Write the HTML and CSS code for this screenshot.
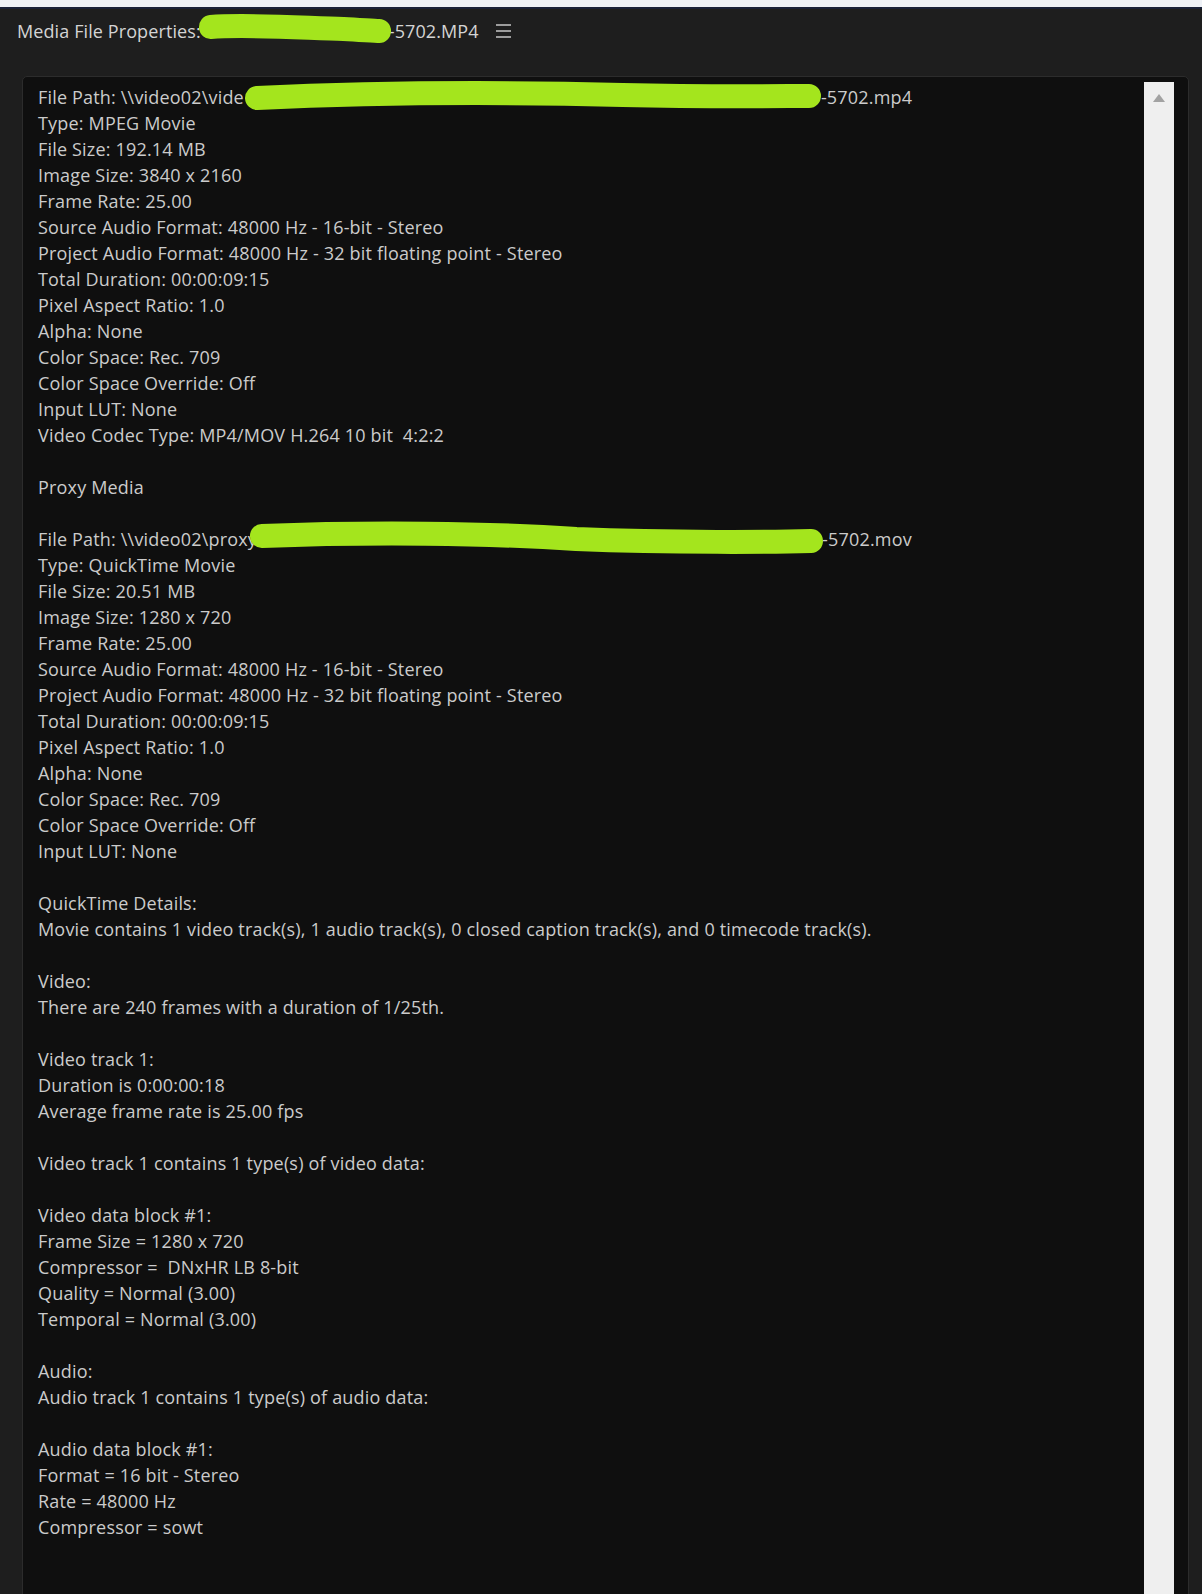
FILE: index.html
```html
<!DOCTYPE html>
<html>
	<head>
		<meta charset="utf-8" />
		<title>Media File Properties</title>
		<link rel="stylesheet" href="styles.css">
	</head>
	<body>
		<div class="topbar"></div>

		<div class="panel">
			<div class="panel-header">
				<span class="title">Media File Properties:<span class="redact r-title"><svg viewBox="0 0 200 34" preserveAspectRatio="none"><path d="M13,15 C50,12 110,16 150,17 C170,18 182,19 187,19" /></svg></span>-5702.MP4</span>
				<svg class="menu-icon" width="15" height="14" viewBox="0 0 15 14"><rect x="0" y="0" width="15" height="2" /><rect x="0" y="6" width="15" height="2" /><rect x="0" y="12" width="15" height="2" /></svg>
			</div>

			<div class="props-box">
				<div class="props-text">
					<div class="ln">File Path: \\video02\vide<span class="redact r-path"><svg viewBox="0 0 580 30" preserveAspectRatio="none"><path d="M13,15 C120,10 260,9 380,12 C470,14 540,13 567,13" /></svg></span>-5702.mp4</div>
					<div class="ln">Type: MPEG Movie</div>
					<div class="ln">File Size: 192.14 MB</div>
					<div class="ln">Image Size: 3840 x 2160</div>
					<div class="ln">Frame Rate: 25.00</div>
					<div class="ln">Source Audio Format: 48000 Hz - 16-bit - Stereo</div>
					<div class="ln">Project Audio Format: 48000 Hz - 32 bit floating point - Stereo</div>
					<div class="ln">Total Duration: 00:00:09:15</div>
					<div class="ln">Pixel Aspect Ratio: 1.0</div>
					<div class="ln">Alpha: None</div>
					<div class="ln">Color Space: Rec. 709</div>
					<div class="ln">Color Space Override: Off</div>
					<div class="ln">Input LUT: None</div>
					<div class="ln">Video Codec Type: MP4/MOV H.264 10 bit  4:2:2</div>
					<div class="ln blank"></div>
					<div class="ln">Proxy Media</div>
					<div class="ln blank"></div>
					<div class="ln">File Path: \\video02\proxy<span class="redact r-proxy"><svg viewBox="0 0 580 34" preserveAspectRatio="none"><path d="M13,13 C120,9 240,10 330,16 C430,20 530,19 567,18" /></svg></span>-5702.mov</div>
					<div class="ln">Type: QuickTime Movie</div>
					<div class="ln">File Size: 20.51 MB</div>
					<div class="ln">Image Size: 1280 x 720</div>
					<div class="ln">Frame Rate: 25.00</div>
					<div class="ln">Source Audio Format: 48000 Hz - 16-bit - Stereo</div>
					<div class="ln">Project Audio Format: 48000 Hz - 32 bit floating point - Stereo</div>
					<div class="ln">Total Duration: 00:00:09:15</div>
					<div class="ln">Pixel Aspect Ratio: 1.0</div>
					<div class="ln">Alpha: None</div>
					<div class="ln">Color Space: Rec. 709</div>
					<div class="ln">Color Space Override: Off</div>
					<div class="ln">Input LUT: None</div>
					<div class="ln blank"></div>
					<div class="ln">QuickTime Details:</div>
					<div class="ln">Movie contains 1 video track(s), 1 audio track(s), 0 closed caption track(s), and 0 timecode track(s).</div>
					<div class="ln blank"></div>
					<div class="ln">Video:</div>
					<div class="ln">There are 240 frames with a duration of 1/25th.</div>
					<div class="ln blank"></div>
					<div class="ln">Video track 1:</div>
					<div class="ln">Duration is 0:00:00:18</div>
					<div class="ln">Average frame rate is 25.00 fps</div>
					<div class="ln blank"></div>
					<div class="ln">Video track 1 contains 1 type(s) of video data:</div>
					<div class="ln blank"></div>
					<div class="ln">Video data block #1:</div>
					<div class="ln">Frame Size = 1280 x 720</div>
					<div class="ln">Compressor =  DNxHR LB 8-bit</div>
					<div class="ln">Quality = Normal (3.00)</div>
					<div class="ln">Temporal = Normal (3.00)</div>
					<div class="ln blank"></div>
					<div class="ln">Audio:</div>
					<div class="ln">Audio track 1 contains 1 type(s) of audio data:</div>
					<div class="ln blank"></div>
					<div class="ln">Audio data block #1:</div>
					<div class="ln">Format = 16 bit - Stereo</div>
					<div class="ln">Rate = 48000 Hz</div>
					<div class="ln">Compressor = sowt</div>
				</div>
				<div class="scrollbar">
					<svg class="scroll-arrow" width="12" height="8" viewBox="0 0 12 8"><path d="M6,0 L12,8 L0,8 Z" /></svg>
				</div>
			</div>
		</div>
	</body>
</html>
```

FILE: styles.css
```css
html, body {
	margin: 0;
	height: 100%;
	overflow: hidden;
}
body {
	background: #1e1e1e;
	font-family: "Open Sans", Lato, sans-serif;
	color: #cbcbcb;
}
.topbar {
	height: 7px;
	background: #eef1f6;
	border-bottom: 2px solid #1a2138;
	box-shadow: 0 1px 0 #4d5b74;
}
.panel {
	background: #1e1e1e;
}
.panel-header {
	height: 43px;
	padding-left: 17px;
	display: flex;
	align-items: center;
	gap: 17px;
}
.title {
	font-size: 18px;
	color: #d4d4d4;
	white-space: pre;
	letter-spacing: 0.1px;
}
.menu-icon {
	fill: #9c9c9c;
	margin-top: 1px;
}
.redact {
	position: relative;
	display: inline-block;
	height: 1em;
	vertical-align: baseline;
}
.redact svg {
	position: absolute;
	overflow: visible;
}
.redact path {
	fill: none;
	stroke: #a4e51d;
	stroke-width: 24;
	stroke-linecap: round;
	stroke-linejoin: round;
}
.r-title {
	width: 188px;
}
.r-title svg {
	left: -3px;
	width: 194px;
	top: -8px;
	height: 34px;
}
.r-path {
	width: 577px;
}
.r-path svg {
	left: 0;
	width: 578px;
	top: -3px;
	height: 30px;
}
.r-proxy {
	width: 565px;
}
.r-proxy svg {
	left: -8px;
	width: 575px;
	top: -5px;
	height: 34px;
}
.props-box {
	margin: 24px 13px 0 22px;
	height: 1560px;
	background: #0f0f0f;
	border: 1px solid #2c2c2c;
	border-radius: 5px;
	display: flex;
}
.props-text {
	flex: 1;
	padding: 7px 0 0 15px;
	font-size: 18px;
	line-height: 26px;
	color: #cbcbcb;
	letter-spacing: 0.18px;
}
.ln {
	height: 26px;
	white-space: pre;
}
.scrollbar {
	width: 30px;
	margin: 5px 14px 0 0;
	background: #efefef;
	display: flex;
	justify-content: center;
	align-items: flex-start;
}
.scroll-arrow {
	fill: #a2a2a2;
	margin-top: 12px;
}
```
